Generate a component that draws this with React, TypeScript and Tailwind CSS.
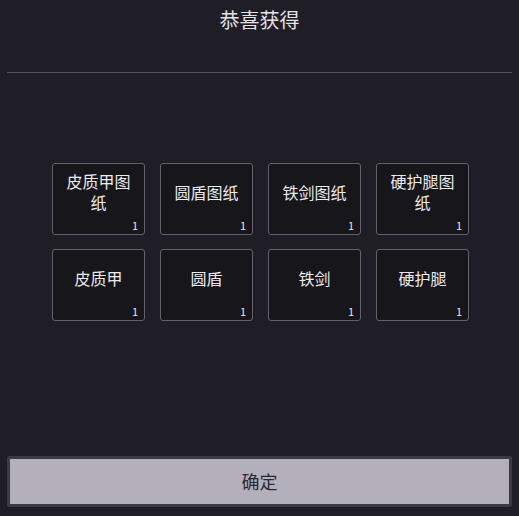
const ITEMS = ['皮质甲图纸', '圆盾图纸', '铁剑图纸', '硬护腿图纸', '皮质甲', '圆盾', '铁剑', '硬护腿'];

export default function App() {
  return (
    <div
      className="w-[519px] h-[516px] bg-[#1f1d25] flex flex-col text-[#e4e2e8]"
      style={{ fontFamily: '"Noto Sans CJK SC", "Noto Sans", sans-serif' }}
    >
      <div className="h-[40px] flex items-center justify-center text-[20px] leading-none">恭喜获得</div>
      <div className="mx-[7px] mt-[32px] h-px bg-[#55525d]" />
      <div className="flex-1 flex justify-center pt-[90px] pl-[2px]">
        <div className="grid grid-cols-4 gap-x-[15px] gap-y-[14px] h-fit">
          {ITEMS.map((name) => (
            <div
              key={name}
              className="w-[93px] h-[72px] rounded-[3px] border border-[#64616b] bg-[#17161b] flex flex-col"
            >
              <div className="flex-1 flex items-center justify-center px-[8px] text-center text-[16px] leading-[21px] text-[#ecebef]">
                {name}
              </div>
              <div className="h-[14px] pr-[6px] pb-[3px] text-right text-[11px] leading-none">1</div>
            </div>
          ))}
        </div>
      </div>
      <div className="px-[7px] pb-[9px]">
        <button className="w-full h-[51px] rounded-[2px] border-[3px] border-[#3b3943] bg-[#b3afbb] text-[#2a2831] text-[18px]">
          确定
        </button>
      </div>
    </div>
  );
}
